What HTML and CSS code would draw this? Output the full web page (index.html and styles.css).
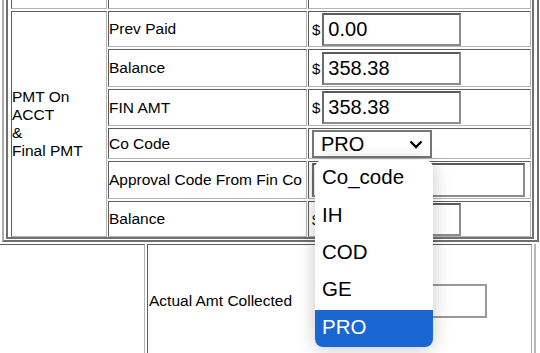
FILE: index.html
```html
<!DOCTYPE html>
<html lang="en">
<head>
    <meta charset="UTF-8">
    <meta name="viewport" content="width=device-width, initial-scale=1.0">
    <title>Final Payment</title>
    <link rel="stylesheet" href="styles.css">
</head>
<body>
    <div class="frame">
        <div class="section">
            <div class="form-grid">
                <div class="cell prev"></div>
                <div class="cell prev"></div>
                <div class="cell prev"></div>

                <div class="cell group">PMT On<br>ACCT<br>&amp;<br>Final PMT</div>

                <div class="cell label">Prev Paid</div>
                <div class="cell value"><span class="cur">$</span><input type="text" class="amt" value="0.00"></div>

                <div class="cell label">Balance</div>
                <div class="cell value"><span class="cur">$</span><input type="text" class="amt" value="358.38"></div>

                <div class="cell label">FIN AMT</div>
                <div class="cell value"><span class="cur">$</span><input type="text" class="amt" value="358.38"></div>

                <div class="cell label">Co Code</div>
                <div class="cell value">
                    <div class="select-box">
                        <span>PRO</span>
                        <svg class="chevron" width="14" height="9" viewBox="0 0 14 9"><polyline points="1.5,1.5 7,7 12.5,1.5" fill="none" stroke="#000" stroke-width="2.4"/></svg>
                    </div>
                </div>

                <div class="cell label">Approval Code From Fin Co</div>
                <div class="cell value"><input type="text" class="amt wide" value=""></div>

                <div class="cell label">Balance</div>
                <div class="cell value"><span class="cur">$</span><input type="text" class="amt" value=""></div>
            </div>
        </div>
    </div>

    <div class="summary">
        <div class="cell blank"></div>
        <div class="cell collect">
            <span class="collect-label">Actual Amt Collected</span>
            <input type="text" class="amt short" value="">
        </div>
    </div>

    <!-- open list of the Co Code select -->
    <div class="select-menu">
        <div class="option">Co_code</div>
        <div class="option">IH</div>
        <div class="option">COD</div>
        <div class="option">GE</div>
        <div class="option selected">PRO</div>
    </div>
</body>
</html>
```

FILE: styles.css
```css
* {
    box-sizing: border-box;
}
body {
    margin: 0;
    width: 540px;
    height: 353px;
    overflow: hidden;
    position: relative;
    background: #fff;
    font-family: "Liberation Sans", Arial, sans-serif;
    font-size: 15.5px;
    color: #000;
}
.frame {
    margin-left: 2px;
    width: 537px;
    padding: 0 3px 1px 2px;
    border-left: 2px solid #acacac;
    border-right: 2px solid #6e6e6e;
    border-bottom: 2px solid #6e6e6e;
}
.section {
    padding: 0 1px 0 3px;
    border: 2px solid #707070;
    border-top: none;
}
.form-grid {
    display: grid;
    grid-template-columns: 96px 199px 223px;
    grid-template-rows: 9px 36px 38px 37px 31px 38px 36px;
    gap: 2px 1px;
}
.cell {
    border: 1px solid;
    border-color: #5e5e5e #b4b4b4 #b4b4b4 #5e5e5e;
    display: flex;
    align-items: center;
}
.prev {
    border-top: none;
}
.group {
    grid-row: 2 / span 6;
    line-height: 1.149;
}
.label {
    padding: 0;
}
.value {
    padding-left: 3px;
    gap: 2px;
}
.cur {
    font-size: 15px;
}
.amt {
    height: 33px;
    width: 139px;
    padding: 0 4px;
    font-family: "Liberation Sans", Arial, sans-serif;
    font-size: 20px;
    color: #000;
    background: #fff;
    border: 2px solid #8c8c8c;
    border-top-color: #5c5c5c;
    border-left-color: #6c6c6c;
    outline: none;
}
.amt.wide {
    width: 213px;
    height: 34px;
}
.amt.short {
    width: 140px;
    height: 34px;
    margin: 0 44px 0 auto;
    border: 2px solid #9a9a9a;
}
.select-box {
    width: 120px;
    height: 28px;
    margin-top: 1px;
    display: flex;
    align-items: center;
    justify-content: space-between;
    padding: 0 7px 0 7px;
    border: 2px solid #767676;
    font-size: 20px;
}
.chevron {
    display: block;
    margin-top: 1px;
}
.summary {
    margin: 2px 0 0 -10px;
    width: 546px;
    height: 120px;
    display: grid;
    grid-template-columns: 155px 385px;
    gap: 2px;
    padding-right: 2px;
    border-right: 2px solid #b8b8b8;
}
.collect {
    height: 114px;
    padding-left: 1px;
}
.collect-label {
    white-space: nowrap;
}
.select-menu {
    position: absolute;
    left: 315px;
    top: 160px;
    width: 118px;
    height: 187px;
    display: flex;
    flex-direction: column;
    background: #fff;
    border-radius: 8px;
    overflow: hidden;
    box-shadow: 0 2px 18px rgba(0, 0, 0, 0.22);
    font-size: 20.5px;
}
.option {
    flex: 1;
    display: flex;
    align-items: center;
    padding-left: 7px;
    padding-bottom: 3px;
}
.option.selected {
    background: #1a67d2;
    color: #fff;
}
```
